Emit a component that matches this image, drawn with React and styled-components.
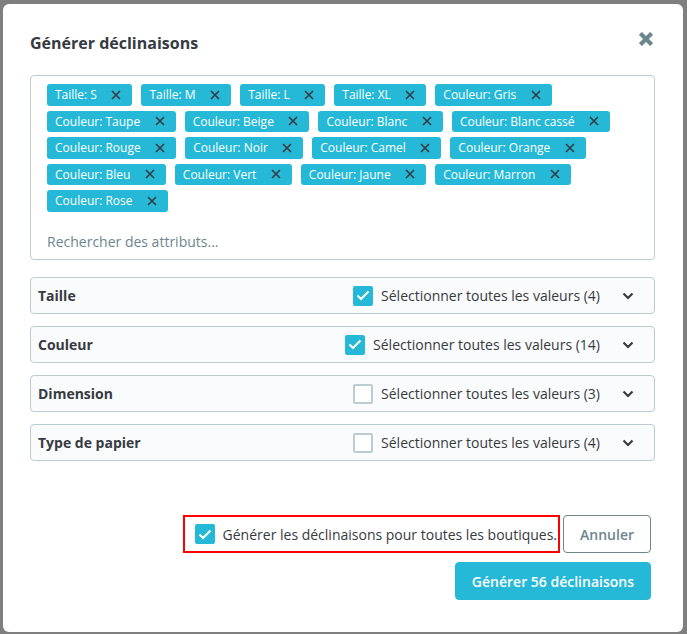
import React from "react";
import styled, { createGlobalStyle } from "styled-components";

const Global = createGlobalStyle`
  html, body { margin: 0; padding: 0; }
  body {
    background: #7f7f7f;
    font-family: "Open Sans", "Liberation Sans", sans-serif;
    color: #363a41;
    -webkit-font-smoothing: antialiased;
  }
  * { box-sizing: border-box; }
`;

const Page = styled.div`
  width: 687px;
  height: 634px;
  padding: 4px 4px 2px 3px;
`;

const Modal = styled.div`
  width: 680px;
  height: 628px;
  background: #fff;
  border-radius: 6px;
  display: flex;
  flex-direction: column;
`;

const Header = styled.div`
  display: flex;
  align-items: center;
  justify-content: space-between;
  padding: 28px 30px 0 27px;
  height: 50px;
`;

const Title = styled.h4`
  margin: 0;
  font-size: 16px;
  line-height: 22px;
  font-weight: 700;
  color: #363a41;
`;

const Close = styled.button`
  border: 0;
  background: none;
  padding: 0;
  width: 14px;
  height: 14px;
  display: flex;
  cursor: pointer;
  margin-top: -8px;
`;

const Body = styled.div`
  padding: 21px 28px 0 27px;
  display: flex;
  flex-direction: column;
`;

const TagBox = styled.div`
  height: 185px;
  border: 1px solid #bbcdd2;
  border-radius: 4px;
  padding: 8px 16px 0 16px;
  display: flex;
  flex-direction: column;
`;

const Tags = styled.div`
  display: flex;
  flex-wrap: wrap;
  column-gap: 9px;
  row-gap: 5px;
`;

const Tag = styled.span`
  display: inline-flex;
  align-items: center;
  height: 21.5px;
  background: #25b9d7;
  border-radius: 3px;
  color: #fff;
  font-size: 12px;
  padding: 0 11px 0 8px;
  white-space: nowrap;
`;

const TagX = styled.span`
  display: flex;
  margin-left: 14.5px;
`;

const Search = styled.div`
  margin-top: auto;
  margin-bottom: 7px;
  font-size: 14px;
  color: #6c868e;
  line-height: 20px;
`;

const Groups = styled.div`
  margin-top: 17px;
  display: flex;
  flex-direction: column;
  gap: 12px;
`;

const Group = styled.div`
  height: 37px;
  border: 1px solid #bbcdd2;
  border-radius: 4px;
  background: #fafbfc;
  display: flex;
  align-items: center;
  padding: 0 20px 0 7px;
`;

const GroupName = styled.span`
  font-size: 14px;
  font-weight: 700;
  color: #363a41;
  flex: 1;
`;

const SelectAll = styled.label`
  display: flex;
  align-items: center;
  gap: 8px;
  font-size: 14px;
  color: #363a41;
  margin-right: 22px;
`;

const Box = styled.span`
  width: 20px;
  height: 20px;
  border-radius: 2px;
  display: inline-flex;
  align-items: center;
  justify-content: center;
  flex-shrink: 0;
  background: ${(p) => (p.$checked ? "#25b9d7" : "#fff")};
  border: ${(p) => (p.$checked ? "none" : "2px solid #bbcdd2")};
`;

const Footer = styled.div`
  margin-top: auto;
  padding: 0 32px 32px 0;
  display: flex;
  flex-direction: column;
  align-items: flex-end;
  gap: 9px;
`;

const FooterRow = styled.div`
  display: flex;
  align-items: center;
  gap: 3px;
`;

const ShopCheck = styled.label`
  display: flex;
  align-items: center;
  gap: 8px;
  height: 38px;
  padding: 0 1px 0 10px;
  border: 2px solid #ff0000;
  font-size: 14px;
  color: #363a41;
  white-space: nowrap;
`;

const Button = styled.button`
  height: 38px;
  border-radius: 4px;
  font-family: inherit;
  font-size: 14px;
  font-weight: 600;
  padding: 0 16px;
  cursor: pointer;
  border: 1px solid ${(p) => (p.$primary ? "#25b9d7" : "#6c868e")};
  background: ${(p) => (p.$primary ? "#25b9d7" : "#fff")};
  color: ${(p) => (p.$primary ? "#fff" : "#6c868e")};
`;

const Check = () => (
  <svg width="14" height="11" viewBox="0 0 14 11">
    <path d="M1.5 5.5 L5 9 L12.5 1.5" fill="none" stroke="#fff" strokeWidth="2" />
  </svg>
);

const XIcon = ({ size = 10, color = "#363a41", w = 1.6 }) => (
  <svg width={size} height={size} viewBox="0 0 10 10">
    <path d="M1 1 L9 9 M9 1 L1 9" stroke={color} strokeWidth={w} fill="none" />
  </svg>
);

const Chevron = () => (
  <svg width="12" height="8" viewBox="0 0 12 8">
    <path d="M1.5 1.5 L6 6 L10.5 1.5" fill="none" stroke="#363a41" strokeWidth="2.2" />
  </svg>
);

const tags = [
  "Taille: S", "Taille: M", "Taille: L", "Taille: XL", "Couleur: Gris",
  "Couleur: Taupe", "Couleur: Beige", "Couleur: Blanc", "Couleur: Blanc cassé",
  "Couleur: Rouge", "Couleur: Noir", "Couleur: Camel", "Couleur: Orange",
  "Couleur: Bleu", "Couleur: Vert", "Couleur: Jaune", "Couleur: Marron",
  "Couleur: Rose",
];

const groups = [
  { name: "Taille", n: 4, checked: true },
  { name: "Couleur", n: 14, checked: true },
  { name: "Dimension", n: 3, checked: false },
  { name: "Type de papier", n: 4, checked: false },
];

export default function App() {
  return (
    <>
      <Global />
      <Page>
        <Modal>
          <Header>
            <Title>Générer déclinaisons</Title>
            <Close aria-label="Fermer">
              <XIcon size={14} color="#6c868e" w={3} />
            </Close>
          </Header>
          <Body>
            <TagBox>
              <Tags>
                {tags.map((t) => (
                  <Tag key={t}>
                    {t}
                    <TagX><XIcon /></TagX>
                  </Tag>
                ))}
              </Tags>
              <Search>Rechercher des attributs...</Search>
            </TagBox>
            <Groups>
              {groups.map((g) => (
                <Group key={g.name}>
                  <GroupName>{g.name}</GroupName>
                  <SelectAll>
                    <Box $checked={g.checked}>{g.checked && <Check />}</Box>
                    Sélectionner toutes les valeurs ({g.n})
                  </SelectAll>
                  <Chevron />
                </Group>
              ))}
            </Groups>
          </Body>
          <Footer>
            <FooterRow>
              <ShopCheck>
                <Box $checked><Check /></Box>
                Générer les déclinaisons pour toutes les boutiques.
              </ShopCheck>
              <Button>Annuler</Button>
            </FooterRow>
            <Button $primary>Générer 56 déclinaisons</Button>
          </Footer>
        </Modal>
      </Page>
    </>
  );
}
